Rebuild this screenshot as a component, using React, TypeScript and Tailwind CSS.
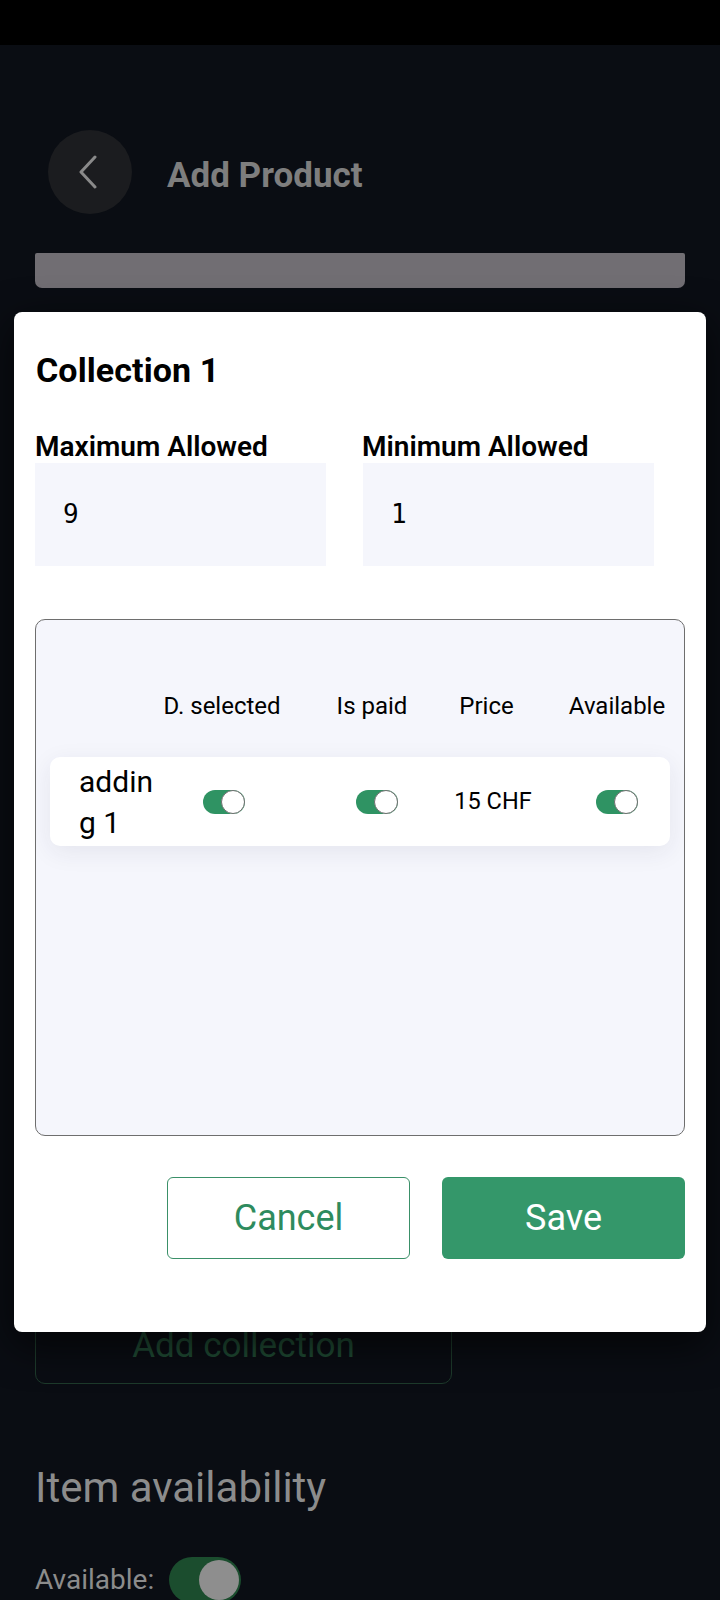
import React from "react";

function Toggle() {
  return (
    <div className="relative h-[24px] w-[42px] rounded-full bg-[#2f9363]">
      <div className="absolute right-0 top-0 h-[24px] w-[24px] rounded-full border border-[#6f6f6f] bg-white" />
    </div>
  );
}

function Cols({ a, b, c, d, e }: { a: React.ReactNode; b: React.ReactNode; c: React.ReactNode; d: React.ReactNode; e: React.ReactNode }) {
  return (
    <div className="flex items-center">
      <div className="w-[134px] pl-[29px]">{a}</div>
      <div className="flex w-[80px] justify-center whitespace-nowrap">{b}</div>
      <div className="ml-[73px] flex w-[80px] justify-center whitespace-nowrap">{c}</div>
      <div className="ml-[36px] flex w-[80px] justify-center whitespace-nowrap">{d}</div>
      <div className="ml-[44px] flex w-[80px] justify-center whitespace-nowrap">{e}</div>
    </div>
  );
}

export default function App() {
  return (
    <div
      className="relative h-[1600px] w-[720px] overflow-hidden bg-[#0a0d13]"
      style={{ fontFamily: "Roboto, 'Noto Sans', sans-serif" }}
    >
      <div className="h-[45px] bg-black" />
      <div className="px-[35px]">
        <div className="mt-[85px] flex items-center">
          <div className="ml-[13px] flex h-[84px] w-[84px] items-center justify-center rounded-full bg-[#1b1c1f]">
            <svg width="24" height="34" viewBox="0 0 24 34" className="-ml-[3px]">
              <polyline points="18,2 4,17 18,32" fill="none" stroke="#8a8a8a" strokeWidth="3" strokeLinecap="round" strokeLinejoin="round" />
            </svg>
          </div>
          <div className="ml-[35px] pt-[7px] text-[35px] font-bold leading-none text-[#7e7e7e]">Add Product</div>
        </div>
        <div className="mt-[39px] h-[35px] rounded-b-[7px] rounded-t-[2px] bg-[#716e73]" />
        <div className="mt-[1014px] flex h-[82px] w-[417px] items-center justify-center rounded-[10px] border-[1.5px] border-[#1d3a2b] pt-[4px] text-[35px] leading-none text-[#1f4a33]">
          Add collection
        </div>
        <div className="mt-[83px] text-[42px] leading-none text-[#8c8c8c]">Item availability</div>
        <div className="mt-[48px] flex items-center gap-[15px]">
          <span className="text-[28px] leading-none text-[#8c8c8c]">Available:</span>
          <div className="relative h-[46px] w-[72px] rounded-full bg-[#1b4d2e]">
            <div className="absolute right-[2px] top-[3px] h-[40px] w-[40px] rounded-full bg-[#8e8e8e]" />
          </div>
        </div>
      </div>

      <div className="absolute left-[14px] top-[312px] h-[1020px] w-[692px] rounded-[8px] bg-white px-[21px] pt-[41px] shadow-[0_12px_40px_rgba(0,0,0,0.7)]">
        <div className="pl-[1px] text-[34px] font-bold leading-none tracking-[0.1px] text-black">Collection 1</div>
        <div className="mt-[46px] flex gap-[37px]">
          <div className="w-[291px]">
            <div className="text-[28px] font-semibold leading-none text-black">Maximum Allowed</div>
            <div
              className="mt-[2px] flex h-[103px] items-center bg-[#f5f6fc] pl-[28px] text-[26px] text-black"
              style={{ fontFamily: "'DejaVu Sans Mono', monospace" }}
            >
              9
            </div>
          </div>
          <div className="w-[291px]">
            <div className="-ml-[1px] text-[28px] font-semibold leading-none text-black">Minimum Allowed</div>
            <div
              className="mt-[2px] flex h-[103px] items-center bg-[#f5f6fc] pl-[28px] text-[26px] text-black"
              style={{ fontFamily: "'DejaVu Sans Mono', monospace" }}
            >
              1
            </div>
          </div>
        </div>

        <div className="mt-[53px] h-[517px] rounded-[10px] border-[1.5px] border-[#6e6e6e] bg-[#f5f6fc] pt-[74px]">
          <div className="mx-[14px] text-[24px] leading-none text-black">
            <Cols
              a={null}
              b={<span className="mr-[4px]">D. selected</span>}
              c={<span className="mr-[10px]">Is paid</span>}
              d={<span className="mr-[13px]">Price</span>}
              e={<span>Available</span>}
            />
          </div>
          <div className="mx-[14px] mt-[39px] flex h-[89px] items-center rounded-[10px] bg-white shadow-[0_6px_24px_rgba(40,40,80,0.08)]">
            <Cols
              a={
                <div className="text-[30px] leading-[41px] text-black">
                  addin
                  <br />g 1
                </div>
              }
              b={<Toggle />}
              c={<Toggle />}
              d={<span className="text-[23.5px] text-black">15 CHF</span>}
              e={<Toggle />}
            />
          </div>
        </div>

        <div className="mt-[41px] flex justify-end gap-[32px]">
          <div className="flex h-[82px] w-[243px] items-center justify-center rounded-[6px] border-[1.5px] border-[#3a9068] text-[36px] leading-none text-[#2e8b5e]">
            Cancel
          </div>
          <div className="flex h-[82px] w-[243px] items-center justify-center rounded-[6px] bg-[#34976a] text-[36px] leading-none text-white">
            Save
          </div>
        </div>
      </div>
    </div>
  );
}
